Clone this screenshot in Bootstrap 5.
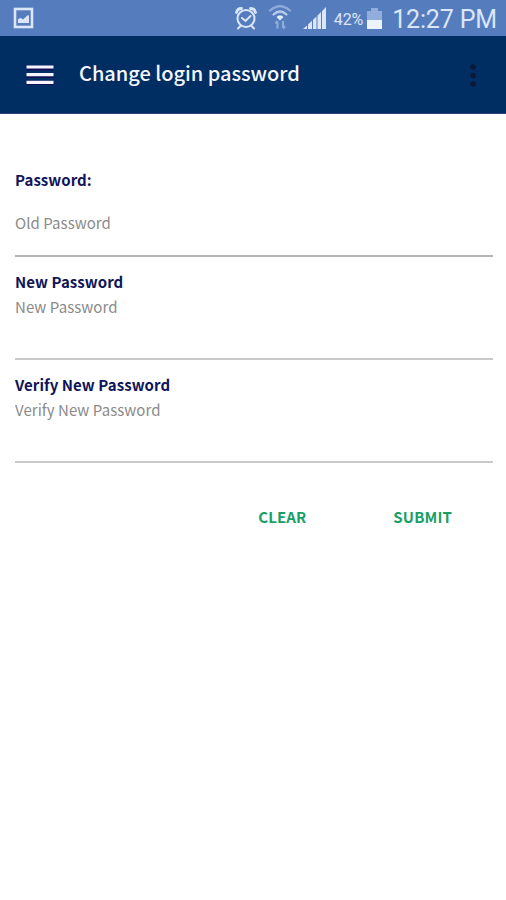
<!DOCTYPE html>
<html lang="en">
<head>
<meta charset="utf-8">
<meta name="viewport" content="width=device-width, initial-scale=1">
<title>Change login password</title>
<link href="https://cdn.jsdelivr.net/npm/bootstrap@5.3.0/dist/css/bootstrap.min.css" rel="stylesheet">
<style>
  body { font-family: "Noto Sans CJK SC", "Open Sans", sans-serif; min-height: 900px; overflow: hidden; }
  .status-bar { height: 36px; background: #557dbe; color: #dbe6fa; font-family: Roboto, sans-serif; padding: 0 9px 0 13px; }
  .status-bar svg { flex: none; display: block; }
  .battery-level { font-size: 16px; line-height: 36px; letter-spacing: -.1px; margin: 3px 4px 0 7px; }
  .clock { font-size: 25px; line-height: 36px; margin: 4px 0 0 10px; letter-spacing: -.15px; }
  .app-bar { height: 78px; background: #002e62; border-bottom: 1px solid #34417c; padding: 0 26px; }
  .app-title { font-size: 20px; line-height: 30px; font-weight: 500; color: #f4f6ff; margin: 0 0 4px 25px; letter-spacing: -.02px; }
  .pw-form { padding: 53px 13px 0 15px; }
  .field { height: 103px; border-bottom: 2px solid #c9c9c9; padding-top: 13px; }
  .field-first { height: 90px; padding-top: 0; border-color: #b5b5b5; }
  .field-first .form-control { margin-top: 18px; }
  .field + .field { padding-top: 12px; }
  .field .form-label { display: block; font-size: 15px; line-height: 25px; font-weight: 700; color: #10155a; letter-spacing: .06px; }
  .field .form-control { height: 25px; font-size: 15px; line-height: 25px; border-radius: 0; letter-spacing: .05px; }
  .field .form-control::placeholder { color: #8b8b8b; opacity: 1; }
  .actions { padding: 40px 41px 0 0; gap: 87px; }
  .actions .btn { font-size: 15px; line-height: 28px; font-weight: 700; color: #1a9f66; letter-spacing: .12px; }
</style>
<script src="https://cdn.jsdelivr.net/npm/bootstrap@5.3.0/dist/js/bootstrap.bundle.min.js"></script>
</head>
<body class="bg-white">
<header>
  <div class="status-bar d-flex align-items-center">
    <svg class="me-auto" width="21" height="22" viewBox="0 0 21 22"><rect x="2" y="2" width="17" height="18" fill="none" stroke="#dbe6fa" stroke-width="2.6"/><path d="M5 16v-4l3-1 2 1.500 5-4.500 1 1v7z" fill="#dbe6fa"/></svg>
    <svg width="24" height="26" viewBox="0 0 24 26" fill="none" stroke="#dbe6fa" stroke-width="2" stroke-linecap="round"><circle cx="12" cy="13.500" r="8.500"/><path d="M8 13l3.500 3 5-5M6 21.500l-2 2M18 21.500l2 2"/><path d="M2.500 7.500a5 5 0 0 1 5-4M21.500 7.500a5 5 0 0 0-5-4" stroke-width="2.800"/></svg>
    <svg class="ms-2" width="28" height="28" viewBox="0 0 28 28" fill="none" stroke-linecap="round"><path d="M4 6.500Q14-2 24 6.500" stroke="#8eabdc" stroke-width="2.200"/><path d="M7.500 10.500Q14 4.500 20.500 10.500" stroke="#b8ccee" stroke-width="2.200"/><path d="M10.500 13Q14 9.500 17.500 13L14 16.500z" fill="#e4edfc"/><path d="M11.500 24.500v-7m-2 2l2-2.500M17 17v7m2-2l-2 2.500" stroke="#8eabdc" stroke-width="2.200" stroke-linecap="butt"/></svg>
    <svg class="ms-2" width="25" height="24" viewBox="0 0 25 24" fill="#dbe6fa"><path d="M1 23l4-3.500V23zM6 18.500l4-3.800V23H6zM11 13.800l3.500-3.400V23H11zM15.500 9.500L19 6.100V23h-3.500zM20 5.200L24 1v22h-4z"/></svg>
    <span class="battery-level">42%</span>
    <svg width="15" height="23" viewBox="0 0 15 23"><path d="M4 1h7v3h4v9H0V4h4z" fill="#91addb"/><path d="M0 13h15v9H0z" fill="#edf3fd"/></svg>
    <span class="clock">12:27 PM</span>
  </div>
  <nav class="app-bar d-flex align-items-center">
    <button class="btn p-0 border-0 lh-1" type="button" aria-label="Menu">
      <svg class="d-block" width="28" height="20" viewBox="0 0 28 20"><path d="M.5 3h27M.5 10.500h27M.5 18h27" stroke="#140f58" stroke-width="5"/><path d="M.5 2h27M.5 9.700h27M.5 17.400h27" stroke="#f6f5ff" stroke-width="3.200"/></svg>
    </button>
    <h1 class="app-title">Change login password</h1>
    <button class="btn p-0 border-0 lh-1 ms-auto" type="button" aria-label="More options">
      <svg class="d-block" width="14" height="26" viewBox="0 0 14 26" fill="#071b35"><circle cx="7" cy="5" r="2.700"/><circle cx="7" cy="13.500" r="2.700"/><circle cx="7" cy="22" r="2.700"/></svg>
    </button>
  </nav>
</header>
<main>
  <form class="pw-form">
    <div class="field field-first">
      <label class="form-label mb-0" for="old">Password:</label>
      <input class="form-control border-0 p-0" id="old" type="password" placeholder="Old Password">
    </div>
    <div class="field">
      <label class="form-label mb-0" for="new">New Password</label>
      <input class="form-control border-0 p-0" id="new" type="password" placeholder="New Password">
    </div>
    <div class="field">
      <label class="form-label mb-0" for="verify">Verify New Password</label>
      <input class="form-control border-0 p-0" id="verify" type="password" placeholder="Verify New Password">
    </div>
    <div class="actions d-flex justify-content-end">
      <button class="btn p-0 border-0" type="reset">CLEAR</button>
      <button class="btn p-0 border-0" type="button">SUBMIT</button>
    </div>
  </form>
</main>
</body>
</html>
